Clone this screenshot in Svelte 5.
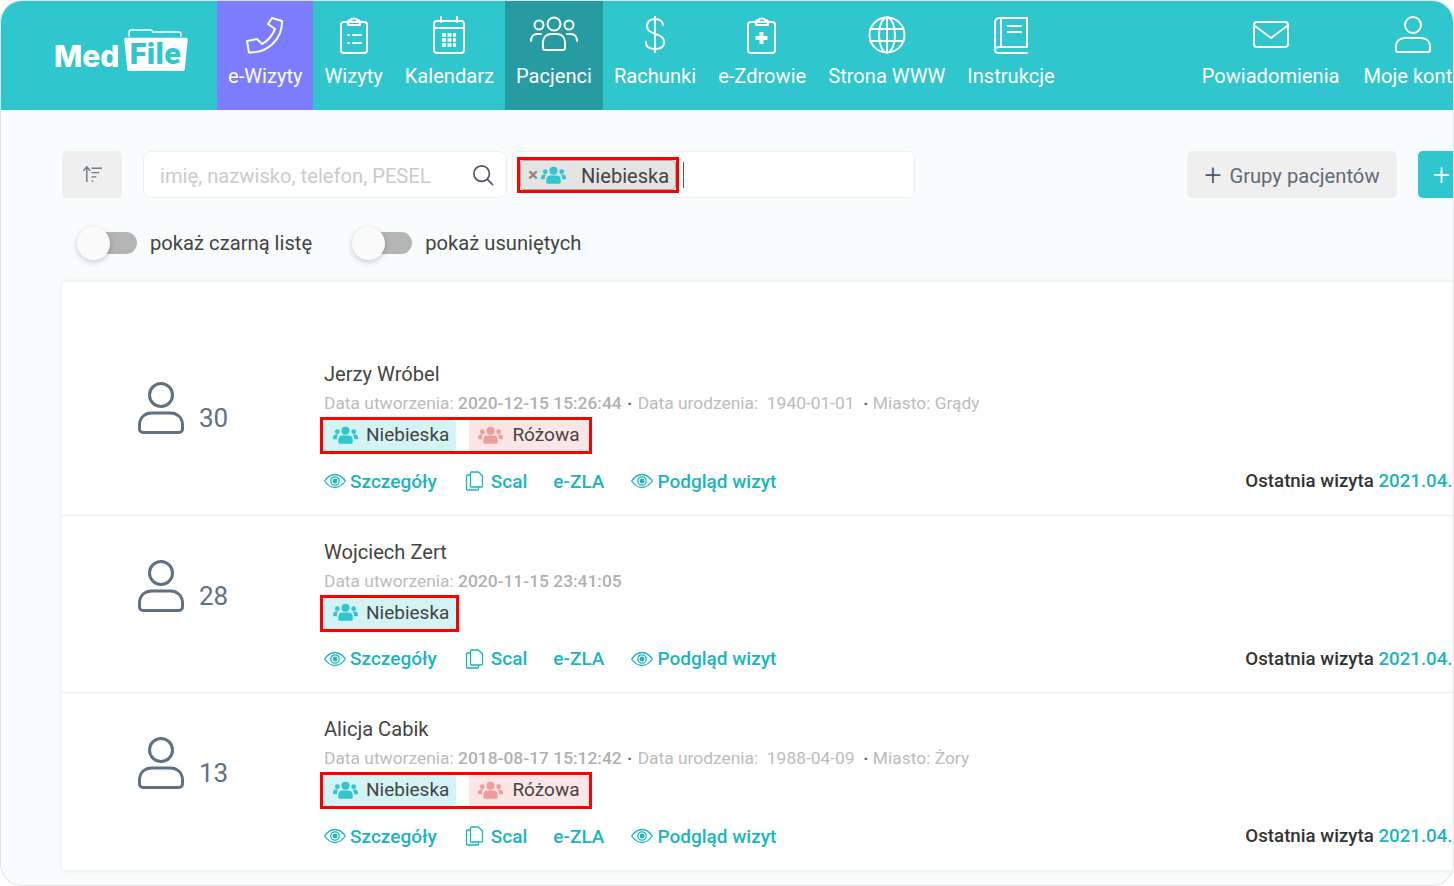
<script>
  const navItems = [
    { label: "e-Wizyty", icon: "phone", cls: "purple" },
    { label: "Wizyty", icon: "list" },
    { label: "Kalendarz", icon: "calendar" },
    { label: "Pacjenci", icon: "people", cls: "active" },
    { label: "Rachunki", icon: "dollar" },
    { label: "e-Zdrowie", icon: "medical" },
    { label: "Strona WWW", icon: "globe" },
    { label: "Instrukcje", icon: "book" },
  ];
  const rightItems = [
    { label: "Powiadomienia", icon: "mail" },
    { label: "Moje konto", icon: "user" },
  ];
  const patients = [
    { name: "Jerzy Wróbel", count: 30, created: "2020-12-15 15:26:44", born: "1940-01-01", city: "Grądy", pink: true },
    { name: "Wojciech Zert", count: 28, created: "2020-11-15 23:41:05" },
    { name: "Alicja Cabik", count: 13, created: "2018-08-17 15:12:42", born: "1988-04-09", city: "Żory", pink: true },
  ];
</script>

{#snippet navIcon(name)}
  <svg class="nav-icon" viewBox="0 0 50 38" fill="none" stroke="currentColor" stroke-width="2" stroke-linecap="round" stroke-linejoin="round">
    {#if name === "phone"}
      <path d="M32 2l10 3C42.500 23 28 37 9 36.500L7 25l10-2 5 5c6-3 10-8 13-15l-7-5z" />
    {:else if name === "list"}
      <rect x="12" y="6" width="26" height="31" rx="3" />
      <path d="M19 6c0-2 2-2 3-2 .5-2 5-2 6 0 1 0 3 0 3 2v3H19z" />
      <path d="M19 19h1M24 19h8M19 27h1M24 27h8" />
    {:else if name === "calendar"}
      <rect x="10" y="5" width="30" height="32" rx="3" />
      <path d="M10 12h30M17 1v5M33 1v5" />
      <path d="M18 19h14M18 24h14M18 29h14" stroke-width="3.500" stroke-dasharray="4 1.500" stroke-linecap="butt" />
    {:else if name === "people"}
      <circle cx="25" cy="8" r="6.500" />
      <circle cx="10" cy="9" r="4.500" />
      <circle cx="40" cy="9" r="4.500" />
      <path d="M14 32v-6c0-5 4-8 8-8h6c4 0 8 3 8 8v6c0 1-1 2-2 2H16c-1 0-2-1-2-2z" />
      <path d="M2 25c0-5 3-7 6-7h4M48 25c0-5-3-7-6-7h-4" />
    {:else if name === "dollar"}
      <path d="M25 0v36M33 9c0-4-4-6-8-6s-8 2-8 7c0 10 17 6 17 16 0 5-4 7-9 7s-9-2-9-7" />
    {:else if name === "medical"}
      <rect x="11" y="6" width="27" height="31" rx="3" />
      <path d="M19 6c0-2 2-2 3-2 .5-2 5-2 6 0 1 0 3 0 3 2v3H19z" />
      <path d="M22.500 16h4v4h4v4h-4v4h-4v-4h-4v-4h4z" fill="currentColor" stroke="none" />
    {:else if name === "globe"}
      <circle cx="25" cy="19" r="17.500" />
      <ellipse cx="25" cy="19" rx="8" ry="17.500" />
      <path d="M25 1.500v35M8.500 13h33M8.500 25h33" />
    {:else if name === "book"}
      <path d="M9 32V6c0-2 2-4 4-4h28v29H13c-2 0-4 1-4 3s2 3 4 3h28" />
      <path d="M15 2v29M22 10h13M22 16h13" />
    {:else if name === "mail"}
      <rect x="8" y="6" width="34" height="25" rx="3" />
      <path d="M9 10l16 12 16-12" />
    {:else if name === "user"}
      <circle cx="25" cy="9" r="8" />
      <path d="M10 36c-1 0-2-1-2-2v-3c0-6 4-9 9-9h16c5 0 9 3 9 9v3c0 1-1 2-2 2z" />
    {/if}
  </svg>
{/snippet}

{#snippet groupIcon()}
  <svg class="group-icon" viewBox="0 0 26 18" fill="currentColor">
    <circle cx="13" cy="4.500" r="4.200" />
    <circle cx="4.500" cy="5.500" r="2.500" />
    <circle cx="21.500" cy="5.500" r="2.500" />
    <path d="M7 18c-1 0-1.500-.5-1.500-1.500V14c0-3 2-4.500 4-4.500h7c2 0 4 1.500 4 4.500v2.500c0 1-.5 1.500-1.500 1.500z" />
    <path d="M0 12c0-2 1-3.500 3-3.500h2.500C5 9 4 11 4 13.500H1c-.6 0-1-.6-1-1.500zM26 12c0-2-1-3.500-3-3.500h-2.500c.5.500 1.500 2.500 1.500 5h3c.6 0 1-.6 1-1.500z" />
  </svg>
{/snippet}

{#snippet eyeIcon()}
  <svg class="act-icon" viewBox="0 0 22 16" fill="none" stroke="currentColor" stroke-width="1.300">
    <path d="M.7 8c3-4.500 6-6.500 10.300-6.500S18.300 3.500 21.300 8c-3 4.500-6 6.500-10.300 6.500S3.700 12.500.7 8z" />
    <circle cx="11" cy="8" r="4.200" />
    <circle cx="11" cy="8" r="1.800" fill="currentColor" />
  </svg>
{/snippet}

<div class="app">
  <header class="topbar">
    <div class="logo">
      <span class="logo-med">Med</span>
      <svg class="logo-folder" viewBox="0 0 66 44">
        <path d="M6 8V3c0-1 1-2 2-2h20c1 0 2 1 2 2h27c1 0 2 1 2 2v3" fill="none" stroke="#fff" stroke-width="1.500" />
        <path d="M2 9h62c1 0 2 1 2 2l-3 30c0 1-1 2-2 2H6c-1 0-2-1-2-2L1 11c0-1 0-2 1-2z" fill="#fff" />
        <text x="33" y="36" text-anchor="middle" class="logo-file">File</text>
      </svg>
    </div>
    {#each navItems as item}
      <div class="nav-item {item.cls ?? ''}">
        {@render navIcon(item.icon)}
        <span>{item.label}</span>
      </div>
    {/each}
    <div class="nav-right">
      {#each rightItems as item}
        <div class="nav-item">
          {@render navIcon(item.icon)}
          <span>{item.label}</span>
        </div>
      {/each}
    </div>
  </header>

  <main class="content">
    <div class="toolbar">
      <button class="sort-btn" aria-label="sortuj">
        <svg viewBox="0 0 24 20" fill="none" stroke="#6c7a89" stroke-width="1.500">
          <path d="M6 18V2M2.500 6L6 2l3.500 4" />
          <path d="M11 3.500h11M11 8h8M11 12.500h5M11 17h2" />
        </svg>
      </button>
      <div class="search">
        <span class="placeholder">imię, nazwisko, telefon, PESEL</span>
        <svg viewBox="0 0 24 24" fill="none" stroke="#4a5560" stroke-width="1.800" stroke-linecap="round">
          <circle cx="10.500" cy="10.500" r="8.500" />
          <path d="M17 17l5.500 5.500" />
        </svg>
      </div>
      <div class="tag-input">
        <div class="red-frame">
          <div class="chip">
            <span class="chip-x">×</span>
            <span class="teal-ic">{@render groupIcon()}</span>
            <span class="chip-label">Niebieska</span>
          </div>
        </div>
        <span class="caret"></span>
      </div>
      <button class="groups-btn"><span class="plus">+</span> <span class="groups-label">Grupy pacjentów</span></button>
      <button class="add-btn">+</button>
    </div>

    <div class="toggles">
      <div class="toggle-item">
        <span class="toggle"><span class="knob"></span></span>
        <span>pokaż czarną listę</span>
      </div>
      <div class="toggle-item second">
        <span class="toggle"><span class="knob"></span></span>
        <span>pokaż usuniętych</span>
      </div>
    </div>

    <section class="card">
      {#each patients as p}
        <article class="row">
          <div class="who">
            <svg class="avatar" viewBox="0 0 46 52" fill="none" stroke="#5f7183" stroke-width="3" stroke-linejoin="round">
              <circle cx="23" cy="13" r="11.500" />
              <path d="M5 50.500c-2 0-3.500-1.500-3.500-3.500v-4c0-8 6-12 12-12h19c6 0 12 4 12 12v4c0 2-1.500 3.500-3.500 3.500z" />
            </svg>
            <span class="count">{p.count}</span>
          </div>
          <div class="info">
            <div class="name">{p.name}</div>
            <div class="meta">
              Data utworzenia: <b>{p.created}</b>
              {#if p.born}
                <span class="dot wide">·</span> Data urodzenia:&nbsp; {p.born} <span class="dot">&nbsp;·</span> Miasto: {p.city}
              {/if}
            </div>
            <div class="tags">
              <span class="tag blue"><span class="teal-ic">{@render groupIcon()}</span>Niebieska</span>
              {#if p.pink}
                <span class="tag pink"><span class="pink-ic">{@render groupIcon()}</span>Różowa</span>
              {/if}
            </div>
            <div class="actions">
              <a class="first">{@render eyeIcon()}Szczegóły</a>
              <a class="scal">
                <svg class="copy-icon" viewBox="0 0 18 20" fill="none" stroke="currentColor" stroke-width="1.300" stroke-linejoin="round">
                  <path d="M6 1h7l4 4v10c0 .6-.4 1-1 1H6c-.6 0-1-.4-1-1V2c0-.6.4-1 1-1z" />
                  <path d="M5 4H2c-.6 0-1 .4-1 1v13c0 .6.4 1 1 1h10c.6 0 1-.4 1-1v-2" />
                </svg>Scal
              </a>
              <a class="zla">e-ZLA</a>
              <a>{@render eyeIcon()}Podgląd wizyt</a>
              <span class="last">Ostatnia wizyta <em>2021.04.12</em></span>
            </div>
          </div>
        </article>
      {/each}
    </section>
  </main>
</div>

<style>
  :global(body) {
    margin: 0;
    background: #fff;
  }
  .app {
    width: 1454px;
    height: 886px;
    box-sizing: border-box;
    border: 1px solid #dfe3e5;
    border-radius: 22px;
    background: #f8fcfd;
    overflow: hidden;
    font-family: Roboto, "Liberation Sans", sans-serif;
    color: #444;
  }
  .topbar {
    display: flex;
    height: 109px;
    background: #2fc6ce;
    color: #fff;
  }
  .logo {
    flex: none;
    width: 216px;
    box-sizing: border-box;
    padding: 28px 0 0 53px;
    display: flex;
    align-items: flex-start;
    gap: 4px;
  }
  .logo-med {
    margin-top: 9px;
    font-family: Inter, Roboto, sans-serif;
    font-size: 30px;
    line-height: 36px;
    font-weight: 800;
  }
  .logo-folder {
    width: 65px;
    height: 43px;
    flex: none;
  }
  .logo-file {
    font-family: Roboto, sans-serif;
    font-size: 31px;
    font-weight: 900;
    letter-spacing: 0.5px;
    fill: #2fc6ce;
  }
  .nav-item {
    flex: none;
    box-sizing: border-box;
    height: 109px;
    padding: 15px 11px 0;
    display: flex;
    flex-direction: column;
    align-items: center;
    gap: 7px;
    font-size: 20.100px;
    line-height: 30px;
    white-space: nowrap;
  }
  .nav-icon {
    width: 50px;
    height: 38px;
    display: block;
  }
  .purple {
    background: #7c7cff;
  }
  .active {
    background: #269ba2;
  }
  .nav-right {
    flex: none;
    display: flex;
    margin-left: 125px;
    gap: 2px;
  }
  .content {
    padding: 41px 0 0 61px;
  }
  .toolbar {
    display: flex;
    height: 47px;
  }
  .toolbar > * {
    flex: none;
    box-sizing: border-box;
  }
  button {
    font-family: inherit;
    border: 0;
    border-radius: 5px;
    padding: 0;
  }
  .sort-btn {
    width: 60px;
    background: #efefef;
    display: flex;
    align-items: center;
    justify-content: center;
  }
  .sort-btn svg {
    width: 23px;
    height: 19px;
  }
  .search {
    width: 364px;
    margin-left: 21px;
    background: #fff;
    border: 1px solid #eef1f3;
    border-radius: 8px;
    display: flex;
    align-items: center;
    justify-content: space-between;
    padding: 0 12px 0 16px;
  }
  .search svg {
    width: 22px;
    height: 22px;
  }
  .placeholder {
    padding-top: 2px;
    font-size: 20.200px;
    color: #c9cccf;
  }
  .tag-input {
    width: 403px;
    margin-left: 5px;
    background: #fff;
    border: 1px solid #eef1f3;
    border-radius: 6px;
    display: flex;
    align-items: center;
    padding-left: 4px;
  }
  .red-frame {
    border: 3px solid #f00;
  }
  .chip {
    height: 30px;
    width: 156px;
    box-sizing: border-box;
    background: #e4e4e4;
    border: 1px solid #aaa;
    border-radius: 4px;
    display: flex;
    align-items: center;
    padding-left: 7px;
  }
  .chip-x {
    font-size: 19px;
    font-weight: 700;
    color: #888;
    width: 13px;
  }
  .chip-label {
    margin-left: 15px;
    padding-top: 2px;
    font-size: 20.100px;
    color: #444;
  }
  .caret {
    width: 1px;
    height: 26px;
    margin-left: 4px;
    background: #555;
  }
  .teal-ic {
    color: #2fc6ce;
    display: flex;
  }
  .pink-ic {
    color: #ee9c9c;
    display: flex;
  }
  .group-icon {
    width: 25px;
    height: 18px;
  }
  .groups-btn {
    width: 210px;
    margin-left: 272px;
    background: #efefef;
    color: #5f6b76;
    font-size: 20.200px;
    display: flex;
    align-items: center;
    justify-content: center;
    gap: 8px;
  }
  .groups-label {
    padding-top: 2px;
  }
  .plus {
    font-size: 30px;
    font-weight: 300;
    line-height: 1;
    color: #4f5d6b;
  }
  .add-btn {
    width: 60px;
    margin-left: 21px;
    background: #2fc6ce;
    color: #fff;
    font-size: 30px;
    font-weight: 300;
    text-align: left;
    padding-left: 15px;
    border-radius: 5px 0 0 5px;
  }
  .toggles {
    display: flex;
    align-items: center;
    height: 36px;
    margin-top: 27px;
    padding-left: 15px;
    font-size: 20.200px;
    color: #444;
  }
  .toggle-item {
    display: flex;
    align-items: center;
    gap: 13px;
  }
  .toggle-item.second {
    margin-left: 40px;
  }
  .toggle {
    position: relative;
    width: 60px;
    height: 22px;
    display: block;
  }
  .toggle::before {
    content: "";
    position: absolute;
    left: 18px;
    right: 0;
    top: 0;
    bottom: 0;
    background: #b5b5b5;
    border-radius: 11px;
  }
  .knob {
    position: absolute;
    left: 0;
    top: -5px;
    width: 33px;
    height: 33px;
    border-radius: 50%;
    background: #fafafa;
    box-shadow: 0 2px 6px rgba(0, 0, 0, 0.2);
  }
  .card {
    margin-top: 21px;
    box-sizing: border-box;
    height: 588px;
    padding-top: 56px;
    background: #fff;
    border-radius: 5px 0 0 5px;
    box-shadow: 0 0 6px rgba(0, 0, 0, 0.08);
  }
  .row {
    display: flex;
    height: 177.500px;
    box-sizing: border-box;
    border-bottom: 1px solid #eee;
  }
  .row:last-child {
    border-bottom: 0;
  }
  .who {
    flex: none;
    width: 262px;
    box-sizing: border-box;
    padding: 44px 0 0 76px;
    display: flex;
    align-items: flex-start;
    gap: 15px;
  }
  .avatar {
    width: 46px;
    height: 52px;
  }
  .count {
    margin-top: 21px;
    font-size: 26px;
    color: #5f7183;
  }
  .info {
    flex: 1;
    min-width: 0;
    padding-top: 22px;
  }
  .name {
    font-size: 20.100px;
    line-height: 28px;
    color: #444;
  }
  .meta {
    font-size: 17.400px;
    line-height: 30px;
    color: #bcbcbc;
    white-space: nowrap;
  }
  .meta b {
    font-weight: 500;
    color: #b0b0b0;
  }
  .dot {
    color: #666;
    font-weight: 700;
  }
  .dot.wide {
    margin: 0 1px;
  }
  .tags {
    display: inline-flex;
    gap: 13px;
    margin: -1px 0 0 -4px;
    border: 3px solid #f00;
    vertical-align: top;
  }
  .tag {
    height: 31px;
    box-sizing: border-box;
    display: flex;
    align-items: center;
    gap: 8px;
    padding: 0 7px 2px 10px;
    font-size: 19px;
    border-radius: 3px;
    color: #444;
  }
  .tag.blue {
    background: #d3f3f5;
  }
  .tag.pink {
    background: #fbe6e6;
    padding: 0 9px 2px;
    gap: 9px;
  }
  .actions {
    display: flex;
    align-items: center;
    margin-top: 9px;
    height: 36px;
    font-size: 19px;
    font-weight: 500;
    color: #1ab5bd;
    white-space: nowrap;
  }
  .actions a {
    display: flex;
    align-items: center;
    margin-left: 27px;
  }
  .actions a.first {
    margin-left: 0;
  }
  .actions a.scal {
    margin-left: 28px;
  }
  .actions a.zla {
    margin-left: 26px;
  }
  .act-icon {
    width: 22px;
    height: 16px;
    margin-right: 4px;
  }
  .copy-icon {
    width: 19px;
    height: 20px;
    margin-right: 7px;
  }
  .last {
    margin-left: 469px;
    font-size: 18.700px;
    color: #333;
  }
  .last em {
    font-style: normal;
    color: #1ab5bd;
  }
</style>
